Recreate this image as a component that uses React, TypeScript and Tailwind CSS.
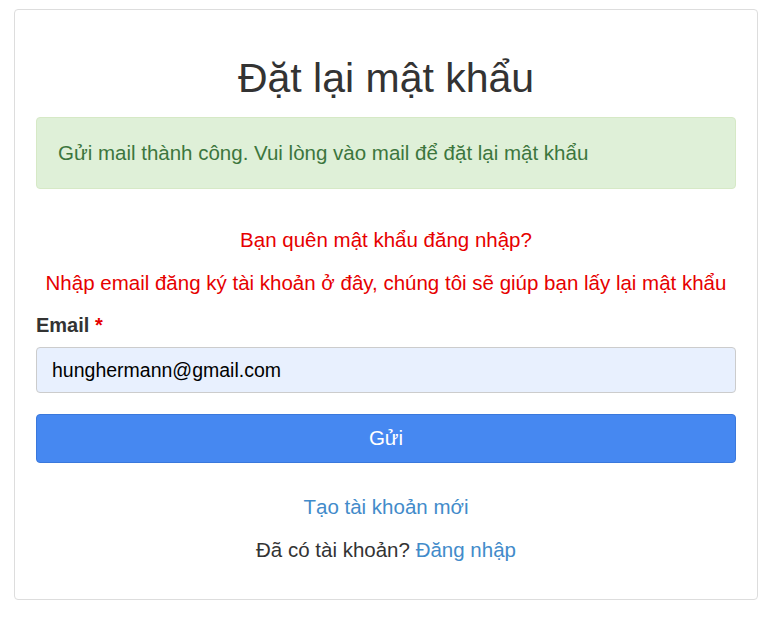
export default function App() {
  return (
    <div className="min-h-screen bg-white pt-[9px] pl-[14px] font-['Liberation_Sans',Arial,sans-serif] text-[#333]">
      <div className="w-[744px] rounded-[4px] border border-[#ddd] px-[21px] pt-[45px] pb-[35px]">
        <h1 className="text-center text-[41px] leading-[46px] font-normal">
          Đặt lại mật khẩu
        </h1>

        <div className="mt-[16px] rounded-[4px] border border-[#d6e9c6] bg-[#dff0d8] px-[21px] py-[21px] text-[20.5px] leading-[28px] text-[#3c763d]">
          Gửi mail thành công. Vui lòng vào mail để đặt lại mật khẩu
        </div>

        <p className="mt-[37px] text-center text-[20.5px] leading-[27px] text-[#e60000]">
          Bạn quên mật khẩu đăng nhập?
        </p>
        <p className="mt-[16px] text-center text-[20.5px] leading-[27px] text-[#e60000]">
          Nhập email đăng ký tài khoản ở đây, chúng tôi sẽ giúp bạn lấy lại mật khẩu
        </p>

        <label className="mt-[16px] block text-[20px] leading-[27px] font-bold">
          Email <span className="text-[#e60000]">*</span>
        </label>
        <input
          className="mt-[8px] block h-[46px] w-full rounded-[4px] border border-[#ccc] bg-[#e8f0fe] px-[15px] text-[19.5px] text-black outline-none"
          type="email"
          defaultValue="hunghermann@gmail.com"
        />

        <button className="mt-[21px] block h-[49px] w-full rounded-[4px] border border-[#3a78dc] bg-[#4688f1] text-[20.5px] text-white">
          Gửi
        </button>

        <div className="mt-[30px] text-center text-[20.5px] leading-[28px]">
          <a href="#" className="text-[#428bca]">
            Tạo tài khoản mới
          </a>
        </div>
        <div className="mt-[15px] text-center text-[20.5px] leading-[28px]">
          Đã có tài khoản?{" "}
          <a href="#" className="text-[#428bca]">
            Đăng nhập
          </a>
        </div>
      </div>
    </div>
  );
}
